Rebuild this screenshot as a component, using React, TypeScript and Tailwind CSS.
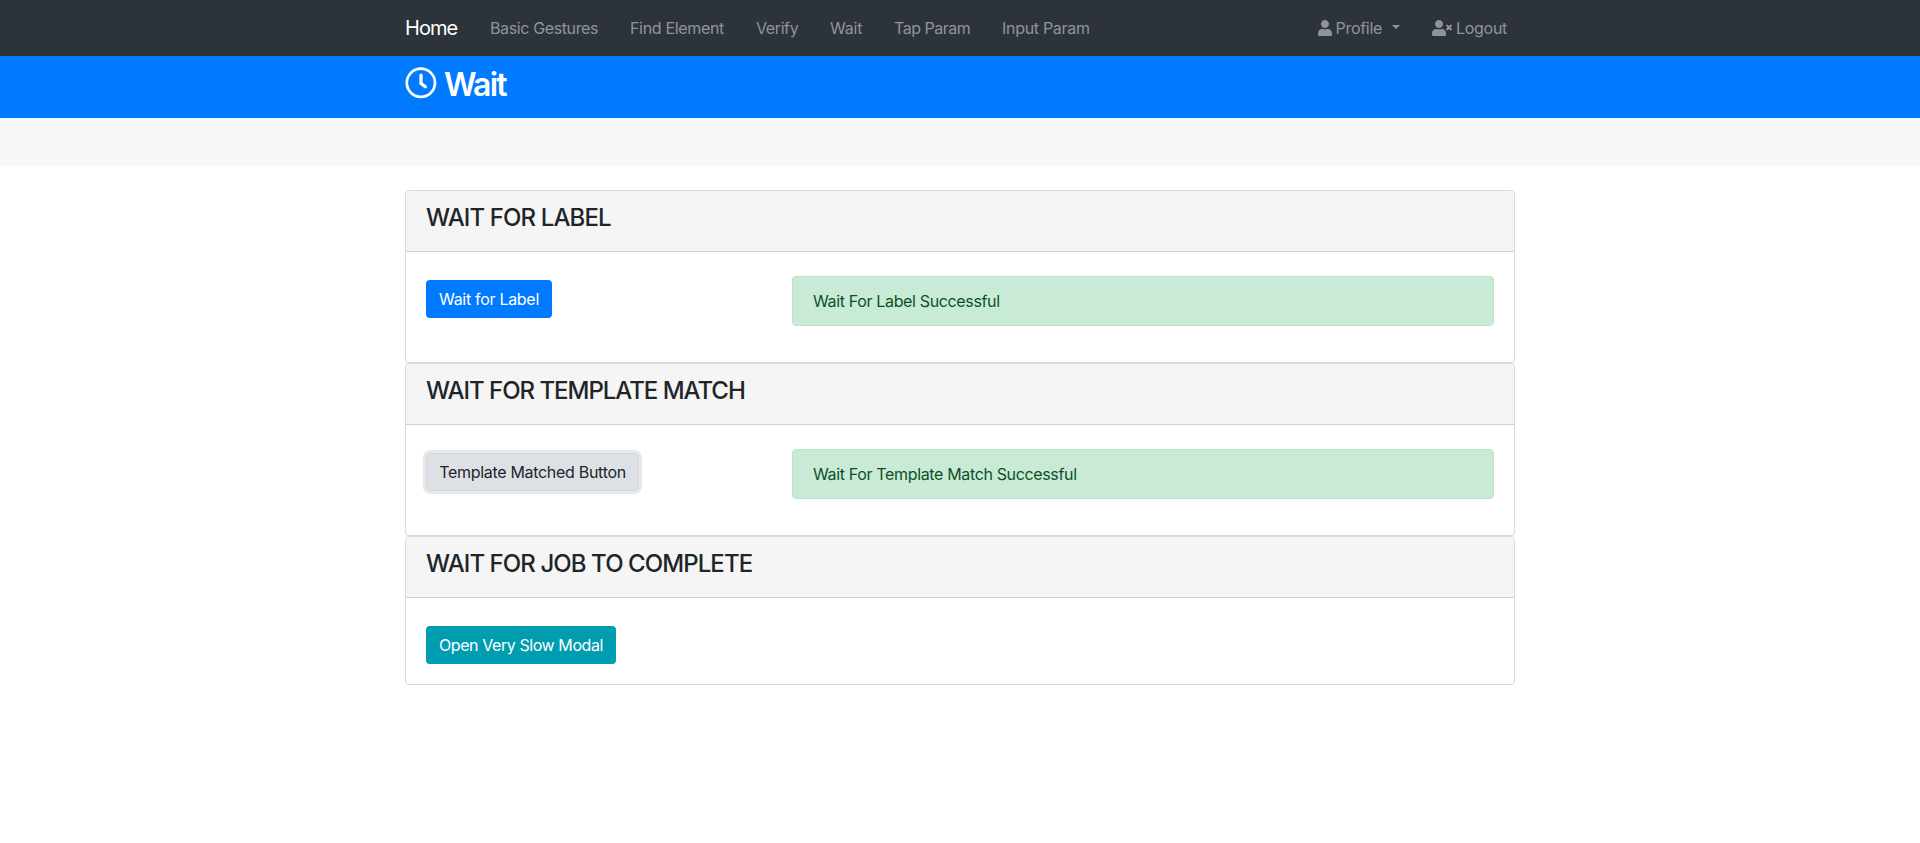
import type { ReactNode } from "react";
import { FaUser, FaUserTimes } from "react-icons/fa";

const links = [
  { label: "Basic Gestures", cls: "w-[108px] tracking-[-0.38px]" },
  { label: "Find Element", cls: "w-[94px] tracking-[-0.33px]" },
  { label: "Verify", cls: "w-[42px] tracking-[-0.4px]" },
  { label: "Wait", cls: "w-[32px] tracking-[-0.2px]" },
  { label: "Tap Param", cls: "w-[76px] tracking-[-0.5px]" },
  { label: "Input Param", cls: "w-[88px] tracking-[-0.3px]" },
];

function ClockIcon() {
  return (
    <svg viewBox="0 0 32 32" className="h-8 w-8" fill="none" stroke="currentColor">
      <circle cx="15.9" cy="15.8" r="14.1" strokeWidth="2.7" />
      <path d="M16 8.2V16.4L20.3 19.7" strokeWidth="3.3" strokeLinecap="round" strokeLinejoin="round" />
    </svg>
  );
}

function Card({ title, titleClass, height, children }: { title: string; titleClass: string; height: string; children: ReactNode }) {
  return (
    <section className={`flex flex-col overflow-hidden rounded border border-[#d9d9d9] bg-white ${height}`}>
      <div className="h-[61px] shrink-0 border-b border-[#d3d3d3] bg-[#f5f5f5] px-5 pt-3">
        <h4 className={`text-2xl leading-[30px] font-[520] ${titleClass}`}>{title}</h4>
      </div>
      <div className="flex grow items-start px-5 pt-6">{children}</div>
    </section>
  );
}

function SuccessAlert({ children }: { children: ReactNode }) {
  return (
    <div className="ml-auto h-[50px] w-[702px] rounded border border-[#b9e4c8] bg-[#c9ead7] px-5 py-3 tracking-[-0.35px] text-[#0b5126]">
      {children}
    </div>
  );
}

export default function App() {
  return (
    <div className="min-h-[843px] bg-white font-['Inter',sans-serif] text-base text-[#212529]">
      <nav className="h-14 bg-[#2d333a] text-[#919497]">
        <div className="mx-auto flex h-full w-[1110px] items-center">
          <a className="mr-8 w-[53px] text-xl tracking-[-0.95px] whitespace-nowrap text-white">Home</a>
          <div className="flex gap-8">
            {links.map((l) => (
              <a key={l.label} className={`whitespace-nowrap ${l.cls}`}>
                {l.label}
              </a>
            ))}
          </div>
          <div className="ml-auto flex items-center gap-8 pr-2 tracking-[-0.3px]">
            <a className="flex items-center">
              <FaUser className="mr-1 h-4 w-[14px]" />
              Profile
              <span className="mb-0.5 ml-2.5 border-x-[4.8px] border-t-[4.8px] border-x-transparent border-t-current" />
            </a>
            <a className="flex items-center">
              <FaUserTimes className="mr-1 h-4 w-5" />
              Logout
            </a>
          </div>
        </div>
      </nav>
      <header className="h-[62px] bg-[#007aff]">
        <div className="mx-auto flex w-[1110px] items-start pt-[11px] text-white">
          <ClockIcon />
          <h2 className="-mt-px ml-[7px] text-[32px] leading-[38px] font-[560] tracking-[-1.8px]">Wait</h2>
        </div>
      </header>
      <div className="h-12 bg-[#f7f8fa]" />
      <main className="mx-auto mt-6 w-[1110px]">
        <Card title="WAIT FOR LABEL" titleClass="tracking-[-0.88px]" height="h-[173px]">
          <button className="mt-1 h-[38px] w-[126px] rounded bg-[#007aff] tracking-[-0.3px] text-white">Wait for Label</button>
          <SuccessAlert>Wait For Label Successful</SuccessAlert>
        </Card>
        <Card title="WAIT FOR TEMPLATE MATCH" titleClass="tracking-[-1.03px]" height="h-[173px]">
          <button className="mt-1 h-[38px] w-[213px] rounded border border-[#d3dae0] bg-[#dde1e5] tracking-[-0.3px] ring-3 ring-[#e8e9e9]">
            Template Matched Button
          </button>
          <SuccessAlert>Wait For Template Match Successful</SuccessAlert>
        </Card>
        <Card title="WAIT FOR JOB TO COMPLETE" titleClass="tracking-[-0.92px]" height="h-[149px]">
          <button className="mt-1 h-[38px] w-[190px] rounded bg-[#009caf] tracking-[-0.42px] text-white">Open Very Slow Modal</button>
        </Card>
      </main>
    </div>
  );
}
